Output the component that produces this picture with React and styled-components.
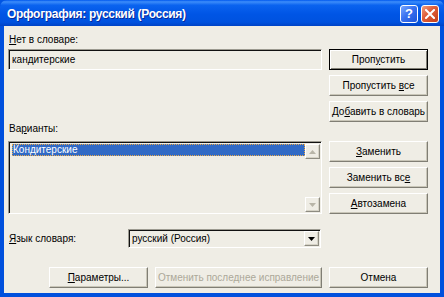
import React from "react";
import styled, { createGlobalStyle } from "styled-components";

const GlobalStyle = createGlobalStyle`
  html, body { margin: 0; padding: 0; overflow: hidden; background: #0054E3; }
  * { box-sizing: border-box; }
`;

const Window = styled.div`
  width: 444px;
  height: 297px;
  display: flex;
  flex-direction: column;
  background: #0050DD;
  border-radius: 7px 7px 0 0;
  overflow: hidden;
  font-family: "Liberation Sans", Arial, sans-serif;
  font-size: 10px;
  color: #000;
`;

const TitleBar = styled.div`
  height: 26px;
  flex: none;
  display: flex;
  align-items: center;
  padding: 1px 5px 0 7px;
  background: linear-gradient(
    to bottom,
    #0058EE 0%,
    #3D8DFA 7%,
    #0A63EF 20%,
    #0055E5 55%,
    #0052DF 85%,
    #0043C6 100%
  );
`;

const Title = styled.div`
  flex: 1;
  color: #fff;
  font-weight: bold;
  font-size: 12px;
  letter-spacing: -0.3px;
  text-shadow: 1px 1px 0 #0A2A9A;
  white-space: nowrap;
`;

const CaptionButton = styled.div`
  width: 18px;
  height: 18px;
  margin-left: ${(p) => (p.$gap ? "3px" : "0")};
  border: 1px solid #fff;
  border-radius: 3px;
  display: flex;
  align-items: center;
  justify-content: center;
  color: #fff;
  font-weight: bold;
  font-size: 13px;
  background: ${(p) =>
    p.$close
      ? "linear-gradient(135deg, #F0A080 0%, #E0603C 40%, #C43E18 100%)"
      : "linear-gradient(135deg, #7AA8FF 0%, #3A72F0 45%, #1E55DA 100%)"};
`;

const Body = styled.div`
  flex: 1;
  margin: 0 4px 4px 4px;
  background: #EFEDE5;
  padding: 7px 12px 5px 4px;
  display: flex;
  flex-direction: column;
`;

const Top = styled.div`
  display: flex;
  gap: 7px;
`;

const LeftCol = styled.div`
  width: 314px;
  display: flex;
  flex-direction: column;
`;

const RightCol = styled.div`
  width: 99px;
  display: flex;
  flex-direction: column;
  padding-top: 16px;
`;

const ButtonGroup = styled.div`
  display: flex;
  flex-direction: column;
  gap: 5px;
  margin-top: ${(p) => p.$mt || 0}px;
`;

const Label = styled.div`
  line-height: 13px;
  height: 13px;
  padding-left: 1px;
  margin-top: ${(p) => p.$mt || 0}px;
  margin-bottom: ${(p) => p.$mb || 0}px;
  white-space: nowrap;
  width: ${(p) => (p.$w ? `${p.$w}px` : "auto")};
  flex: none;
`;

const U = styled.span`
  text-decoration: underline;
`;

const Sunken = styled.div`
  border-top: 1px solid #9C9A90;
  border-left: 1px solid #9C9A90;
  border-right: 1px solid #fff;
  border-bottom: 1px solid #fff;
  box-shadow: inset 1px 1px 0 #111;
  background: #EFEDE5;
`;

const TextBox = styled(Sunken)`
  height: 21px;
  padding: 4px 0 0 3px;
  line-height: 12px;
`;

const ListBox = styled(Sunken)`
  height: 73px;
  margin-top: 6px;
  display: flex;
  padding: 2px 1px 1px 3px;
`;

const ListItems = styled.div`
  flex: 1;
`;

const ListItem = styled.div`
  height: 12px;
  line-height: 11px;
  padding-left: 1px;
  color: ${(p) => (p.$selected ? "#fff" : "#000")};
  background: ${(p) => (p.$selected ? "#316AC5" : "transparent")};
  outline: ${(p) => (p.$selected ? "1px dotted #E8A84A" : "none")};
  outline-offset: -1px;
`;

const ScrollBar = styled.div`
  width: 15px;
  display: flex;
  flex-direction: column;
  justify-content: space-between;
`;

const ArrowButton = styled.div`
  width: 15px;
  height: 15px;
  display: flex;
  align-items: center;
  justify-content: center;
  border-top: 1px solid #fff;
  border-left: 1px solid #fff;
  border-right: 1px solid #8E8C82;
  border-bottom: 1px solid #8E8C82;
  box-shadow: inset -1px -1px 0 #D6D3C6;
`;

const Button = styled.div`
  height: 21px;
  width: ${(p) => p.$w || 99}px;
  line-height: 19px;
  text-align: center;
  white-space: nowrap;
  overflow: hidden;
  background: #EFEDE5;
  color: ${(p) => (p.$disabled ? "#ACA899" : "#000")};
  border-top: 1px solid ${(p) => (p.$default ? "#000" : "#fff")};
  border-left: 1px solid ${(p) => (p.$default ? "#000" : "#fff")};
  border-right: 1px solid ${(p) => (p.$default ? "#000" : "#807E74")};
  border-bottom: 1px solid ${(p) => (p.$default ? "#000" : "#807E74")};
  box-shadow: ${(p) =>
    p.$default
      ? "inset 1px 1px 0 #fff, inset -1px -1px 0 #807E74"
      : "inset -1px -1px 0 #C9C6B8"};
`;

const LangRow = styled.div`
  display: flex;
  align-items: center;
  margin-top: 15px;
`;

const Combo = styled(Sunken)`
  width: 193px;
  height: 19px;
  display: flex;
  align-items: center;
  padding: 1px 1px 1px 3px;
`;

const ComboText = styled.div`
  flex: 1;
`;

const BottomRow = styled.div`
  display: flex;
  justify-content: flex-end;
  gap: 7px;
  margin-top: 19px;
`;

const UpArrow = ({ color }) => (
  <svg width="7" height="4" viewBox="0 0 7 4">
    <polygon points="3.5,0 7,4 0,4" fill={color} />
  </svg>
);

const DownArrow = ({ color }) => (
  <svg width="7" height="4" viewBox="0 0 7 4">
    <polygon points="0,0 7,0 3.5,4" fill={color} />
  </svg>
);

export default function App() {
  return (
    <>
      <GlobalStyle />
      <Window>
        <TitleBar>
          <Title>Орфография: русский (Россия)</Title>
          <CaptionButton>?</CaptionButton>
          <CaptionButton $close $gap>
            <svg width="10" height="10" viewBox="0 0 10 10">
              <path d="M1 1 L9 9 M9 1 L1 9" stroke="#fff" strokeWidth="2" strokeLinecap="square" />
            </svg>
          </CaptionButton>
        </TitleBar>
        <Body>
          <Top>
            <LeftCol>
              <Label $mb={3}>
                <U>Н</U>ет в словаре:
              </Label>
              <TextBox>кандитерские</TextBox>
              <Label $mt={52}>
                Ва<U>р</U>ианты:
              </Label>
              <ListBox>
                <ListItems>
                  <ListItem $selected>Кондитерские</ListItem>
                </ListItems>
                <ScrollBar>
                  <ArrowButton>
                    <UpArrow color="#B8B5A8" />
                  </ArrowButton>
                  <ArrowButton>
                    <DownArrow color="#B8B5A8" />
                  </ArrowButton>
                </ScrollBar>
              </ListBox>
            </LeftCol>
            <RightCol>
              <ButtonGroup>
                <Button $default>
                  Проп<U>у</U>стить
                </Button>
                <Button>
                  Пропустить <U>в</U>се
                </Button>
                <Button>
                  До<U>б</U>авить в словарь
                </Button>
              </ButtonGroup>
              <ButtonGroup $mt={19}>
                <Button>
                  <U>З</U>аменить
                </Button>
                <Button>
                  Заменить вс<U>е</U>
                </Button>
                <Button>
                  <U>А</U>втозамена
                </Button>
              </ButtonGroup>
            </RightCol>
          </Top>
          <LangRow>
            <Label $w={120}>
              <U>Я</U>зык словаря:
            </Label>
            <Combo>
              <ComboText>русский (Россия)</ComboText>
              <ArrowButton>
                <DownArrow color="#000" />
              </ArrowButton>
            </Combo>
          </LangRow>
          <BottomRow>
            <Button>
              <U>П</U>араметры...
            </Button>
            <Button $w={167} $disabled>
              Отменить последнее исправление
            </Button>
            <Button>Отмена</Button>
          </BottomRow>
        </Body>
      </Window>
    </>
  );
}
